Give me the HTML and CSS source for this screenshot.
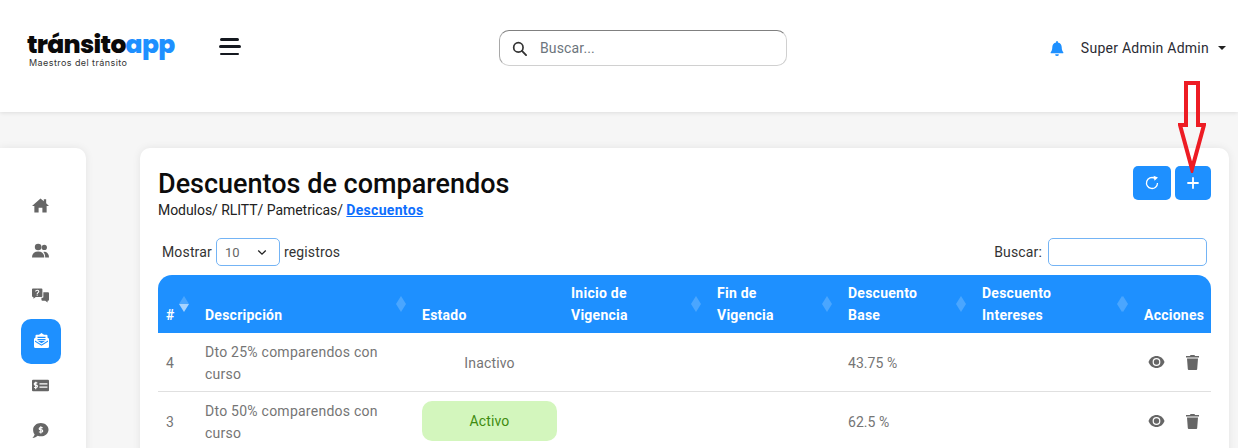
FILE: index.html
```html
<!DOCTYPE html>
<html lang="es">
<head>
<meta charset="utf-8">
<title>Descuentos de comparendos</title>
<link rel="stylesheet" href="styles.css">
</head>
<body>
<header class="topbar">
  <div class="brand">
    <div class="logo"><span class="logo-dark">tránsito</span><span class="logo-blue">app</span></div>
    <div class="tagline">Maestros del tránsito</div>
  </div>
  <button class="burger" aria-label="Menú"><i class="b1"></i><i class="b2"></i><i class="b3"></i></button>
  <div class="search">
    <svg class="search-icon" viewBox="0 0 16 16"><circle cx="6.8" cy="6.8" r="5" fill="none" stroke="#333" stroke-width="1.8"/><path d="M10.6 10.6 15 15" stroke="#333" stroke-width="2" stroke-linecap="round"/></svg>
    <span class="search-ph">Buscar...</span>
  </div>
  <div class="user">
    <svg class="bell" viewBox="0 0 14 16"><path fill="#1e90ff" d="M7 0a1 1 0 0 1 1 1v.7c2.400.4 4 2.400 4 4.800 0 3.400 1 4.600 1.700 5.400.3.4 0 1.100-.6 1.100H.9c-.6 0-.9-.7-.6-1.100C1 11.100 2 9.900 2 6.500c0-2.400 1.600-4.400 4-4.800V1a1 1 0 0 1 1-1zM5 14h4a2 2 0 0 1-4 0z"/></svg>
    <span class="user-name">Super Admin Admin</span>
    <i class="caret"></i>
  </div>
</header>

<div class="page">
  <nav class="sidebar">
    <a class="nav-item"><svg viewBox="0 0 18 15"><path fill="#666" d="M9 0 12.500 3V1H15V5.200L18 8H15.500V15H11V10H7V15H2.500V8H0z"/></svg></a>
    <a class="nav-item"><svg viewBox="0 0 18 15"><circle cx="6.500" cy="3.800" r="3.500" fill="#666"/><circle cx="13" cy="4.300" r="2.800" fill="#666"/><path fill="#666" d="M0 15c0-4 2-6.500 6.500-6.500S13 11 13 15z"/><path fill="#666" d="M14 15c0-2.500-.7-4.700-2-6 3.500-.8 6 1.800 6 6z"/></svg></a>
    <a class="nav-item"><svg viewBox="0 0 18 15"><path fill="#666" d="M1 0h9a1 1 0 0 1 1 1v7a1 1 0 0 1-1 1H4L1.500 11V9H1a1 1 0 0 1-1-1V1a1 1 0 0 1 1-1z"/><path fill="#666" d="M12 4h5a1 1 0 0 1 1 1v7a1 1 0 0 1-1 1h-.5v2L14 13h-3a1 1 0 0 1-1-1v-2h1.500A1 1 0 0 0 12 9z"/><path fill="none" stroke="#fff" stroke-width="1.200" d="M3.800 3.300C4 1.500 7.200 1.500 7.200 3.300 7.200 4.500 5.500 4.400 5.500 5.800"/><rect x="4.900" y="6.500" width="1.200" height="1.200" fill="#fff"/></svg></a>
    <a class="nav-item active"><svg viewBox="0 0 15 15"><path fill="#fff" d="M7.500 0 10 1.800h2.500a1 1 0 0 1 1 1v1.700L15 5.800V13.500a1.500 1.500 0 0 1-1.500 1.500h-12A1.500 1.500 0 0 1 0 13.500V5.800l1.500-1.300V2.800a1 1 0 0 1 1-1H5z"/><path fill="#1e90ff" d="M3.500 3.800h8v1.300h-8zM3.500 6h8v1.300h-8zM1 7.500l6.500 4 6.500-4v1.200l-6.500 4-6.500-4zM4 8h7l-3.500 2.200z"/></svg></a>
    <a class="nav-item"><svg viewBox="0 0 16 12"><rect width="16" height="11" y=".5" rx="1" fill="#666"/><path fill="none" stroke="#fff" stroke-width="1.100" d="M5 3.500H3.200a.9.9 0 0 0 0 2.200h.8a.9.9 0 0 1 0 2.200H2M3.500 2.500v7M7 4.500h7.500M7 7.500h7.500"/></svg></a>
    <a class="nav-item"><svg viewBox="0 0 15 14"><path fill="#666" d="M7.800 0C11.700 0 15 2.700 15 6.200s-3.300 6.200-7.200 6.200c-1 0-2-.2-2.900-.5C3.700 12.900 2 14 0 14c1-.9 1.800-2.100 2-3.400C1.100 9.600.6 7.900.6 6.200.6 2.700 3.900 0 7.800 0z"/><path fill="none" stroke="#fff" stroke-width="1.100" d="M9.500 4.300H7.300a1 1 0 0 0 0 2h1.200a1 1 0 0 1 0 2.100H6M7.800 3v6.700"/></svg></a>
  </nav>

  <main class="card">
    <div class="card-head">
      <div>
        <h1 class="title">Descuentos de comparendos</h1>
        <div class="crumbs">Modulos/ RLITT/ Pametricas/ <a class="crumb-link">Descuentos</a></div>
      </div>
      <div class="actions">
        <button class="btn btn-wide" aria-label="Actualizar"><svg viewBox="0 0 16 16"><path fill="none" stroke="#fff" stroke-width="1.300" d="M13.500 8A5.500 5.500 0 1 1 10.500 3.100"/><path fill="#fff" d="M9.500 .8 14 2.500l-3.500 3.300z"/></svg></button>
        <button class="btn" aria-label="Agregar"><svg viewBox="0 0 16 16"><path stroke="#fff" stroke-width="1.800" stroke-linecap="round" d="M8 3v10M3 8h10"/></svg></button>
      </div>
    </div>

    <div class="controls">
      <div class="length">
        <span>Mostrar</span>
        <span class="select">10<svg viewBox="0 0 12 8"><path fill="none" stroke="#222" stroke-width="1.600" d="M1.500 1.500 6 6l4.500-4.500"/></svg></span>
        <span>registros</span>
      </div>
      <div class="filter">
        <span>Buscar:</span>
        <span class="filter-input"></span>
      </div>
    </div>

    <table class="grid">
      <colgroup>
        <col class="c1"><col class="c2"><col class="c3"><col class="c4"><col class="c5"><col class="c6"><col class="c7"><col class="c8">
      </colgroup>
      <thead>
        <tr>
          <th class="sorted">#</th>
          <th class="sort">Descripción</th>
          <th>Estado</th>
          <th class="sort">Inicio de Vigencia</th>
          <th class="sort">Fin de Vigencia</th>
          <th class="sort">Descuento Base</th>
          <th class="sort">Descuento Intereses</th>
          <th class="sort-left">Acciones</th>
        </tr>
      </thead>
      <tbody>
        <tr>
          <td>4</td>
          <td>Dto 25% comparendos con curso</td>
          <td><span class="status">Inactivo</span></td>
          <td></td><td></td>
          <td class="num">43.75 %</td>
          <td></td>
          <td class="row-actions">
            <svg class="eye" viewBox="0 0 16 12"><path fill="#666" d="M8 0c3.600 0 6.700 2.300 8 6-1.300 3.700-4.400 6-8 6S1.300 9.700 0 6c1.300-3.700 4.400-6 8-6z"/><circle cx="8" cy="6" r="3.900" fill="#fff"/><circle cx="8" cy="6" r="2.700" fill="#666"/></svg>
            <svg class="trash" viewBox="0 0 13 15"><path fill="#666" d="M4.500 0h4l.5 1h4v1.500H0V1h4zM1 3.500h11L11.200 14a1 1 0 0 1-1 1H2.800a1 1 0 0 1-1-1z"/></svg>
          </td>
        </tr>
        <tr>
          <td>3</td>
          <td>Dto 50% comparendos con curso</td>
          <td><span class="status active">Activo</span></td>
          <td></td><td></td>
          <td class="num">62.5 %</td>
          <td></td>
          <td class="row-actions">
            <svg class="eye" viewBox="0 0 16 12"><path fill="#666" d="M8 0c3.600 0 6.700 2.300 8 6-1.300 3.700-4.400 6-8 6S1.300 9.700 0 6c1.300-3.700 4.400-6 8-6z"/><circle cx="8" cy="6" r="3.900" fill="#fff"/><circle cx="8" cy="6" r="2.700" fill="#666"/></svg>
            <svg class="trash" viewBox="0 0 13 15"><path fill="#666" d="M4.500 0h4l.5 1h4v1.500H0V1h4zM1 3.500h11L11.200 14a1 1 0 0 1-1 1H2.800a1 1 0 0 1-1-1z"/></svg>
          </td>
        </tr>
      </tbody>
    </table>
  </main>
</div>

<svg class="arrow" viewBox="0 0 28 92"><path fill="none" stroke="#ed1c24" stroke-width="4" d="M8 2H20V44H26L14 88 2 44H8z"/></svg>
</body>
</html>
```

FILE: styles.css
```css
* { box-sizing: border-box; }
html, body { margin: 0; height: 448px; overflow: hidden; }
body {
  background: #f6f6f6;
  font-family: Roboto, "Liberation Sans", sans-serif;
  font-size: 14px;
  color: #222;
  position: relative;
}

/* Top bar */
.topbar {
  height: 112px;
  background: #fff;
  box-shadow: 0 1px 4px rgba(0,0,0,.1);
  display: flex;
  align-items: flex-start;
  padding: 30px 12px 0 27px;
}
.brand { width: 190px; }
.logo { font-family: Poppins, Inter, "Open Sans", sans-serif; font-weight: 800; font-size: 25px; line-height: 30px; letter-spacing: -.7px; white-space: nowrap; }
.logo-dark { color: #0a0a0a; }
.logo-blue { color: #1e90ff; }
.tagline { font-family: Inter, sans-serif; font-size: 9px; line-height: 10px; margin: -2px 0 0 2px; color: #333; letter-spacing: .43px; white-space: nowrap; }
.burger { width: 24px; height: 17px; margin-top: 8px; padding: 0; border: 0; background: none; display: flex; flex-direction: column; justify-content: space-between; align-items: flex-end; }
.burger i { display: block; height: 2.500px; background: #14181f; border-radius: 2px; }
.b1 { width: 19px; margin-right: 2px; }
.b2 { width: 22px; }
.b3 { width: 19px; margin-right: 2px; }
.search {
  margin-left: 258px;
  width: 288px;
  height: 36px;
  border: 1px solid #a8a8a8;
  border-top-color: #808080;
  border-bottom-color: #d0d0d0;
  border-right-color: #d0d0d0;
  border-radius: 10px;
  display: flex;
  align-items: center;
  padding-left: 12px;
}
.search-icon { width: 15px; height: 15px; }
.search-ph { margin-left: 13px; color: #6c757d; font-size: 14px; letter-spacing: .15px; }
.user { margin-left: auto; display: flex; align-items: center; height: 36px; }
.bell { width: 14px; height: 15px; margin-right: 17px; }
.user-name { font-size: 14px; letter-spacing: .25px; color: #2b2b33; }
.caret { margin-left: 9px; width: 0; height: 0; border: 4px solid transparent; border-top-color: #222; border-bottom: 0; }

/* Page */
.page { display: flex; align-items: flex-start; padding: 36px 9px 0 0; gap: 54px; height: 336px; overflow: hidden; }
.sidebar {
  width: 86px;
  height: 330px;
  background: #fff;
  border-radius: 0 10px 10px 0;
  box-shadow: 0 0 8px rgba(0,0,0,.08);
  display: flex;
  flex-direction: column;
  align-items: center;
  padding: 35px 4px 0 0;
  flex: none;
}
.nav-item { width: 40px; height: 45px; padding-right: 1px; display: flex; align-items: center; justify-content: center; flex: none; }
.nav-item svg { width: 17px; height: 15px; }
.nav-item.active { background: #1e90ff; border-radius: 10px; margin: 1px 0 -1px; padding: 0 0 3px; }
.nav-item.active svg { width: 15px; height: 15px; }
.card {
  flex: 1;
  height: 330px;
  background: #fff;
  border-radius: 10px;
  box-shadow: 0 0 8px rgba(0,0,0,.08);
  padding: 18px 18px 0;
}
.card-head { display: flex; justify-content: space-between; align-items: flex-start; }
.title { margin: 2px 0 0; font-size: 27px; line-height: 32px; font-weight: 500; color: #0c0c0c; }
.crumbs { margin-top: 2px; font-size: 14px; line-height: 17px; color: #222; letter-spacing: -.05px; }
.crumb-link { font-weight: 700; color: #0d6efd; text-decoration: underline; letter-spacing: .3px; }
.actions { display: flex; gap: 4px; }
.btn { width: 36px; height: 34px; border: 0; border-radius: 5px; background: #1e90ff; padding: 0; display: flex; align-items: center; justify-content: center; }
.btn-wide { width: 38px; }
.btn svg { width: 16px; height: 16px; }

.controls { display: flex; justify-content: space-between; align-items: center; margin-top: 19px; padding: 0 4px; height: 28px; letter-spacing: .15px; }
.length, .filter { display: flex; align-items: center; gap: 5px; color: #333; }
.length { gap: 4px; }
.filter { gap: 6px; }
.select { width: 64px; height: 28px; border: 1px solid #74b4f5; border-radius: 5px; display: flex; align-items: center; justify-content: space-between; padding: 0 12px 0 8px; font-size: 13px; color: #666; }
.select svg { width: 10px; height: 7px; }
.filter-input { width: 159px; height: 28px; border: 1px solid #74b4f5; border-radius: 5px; }

/* Table */
.grid { width: 1053px; border-collapse: separate; border-spacing: 0; table-layout: fixed; margin-top: 9px; }
.c1 { width: 39px; } .c2 { width: 217px; } .c3 { width: 149px; } .c4 { width: 146px; }
.c5 { width: 131px; } .c6 { width: 134px; } .c7 { width: 162px; } .c8 { width: 75px; }
.grid th {
  height: 58px;
  background: #1e90ff;
  color: #fff;
  text-align: left;
  vertical-align: bottom;
  font-size: 14px;
  font-weight: 700;
  line-height: 22px;
  padding: 7px 8px 7px;
  position: relative;
  letter-spacing: .25px;
}
.grid th.sort { padding-right: 30px; }
.grid th:first-child { border-top-left-radius: 14px; }
.grid th:last-child { border-top-right-radius: 14px; }
.sort::after, .sort-left::after, .sorted::after {
  content: "";
  position: absolute;
  top: 21px;
  right: 8px;
  width: 10px;
  height: 16px;
  background: #4aa6ff;
  clip-path: polygon(50% 0, 100% 50%, 50% 100%, 0 50%);
}
.sort-left::after { left: -19px; right: auto; }
.sorted::after { right: 8px; background: linear-gradient(#4aa6ff 50%, #a5d3ff 50%); }
.grid td {
  height: 59px;
  padding: 2px 8px 0;
  font-size: 14px;
  line-height: 22px;
  color: #757575;
  letter-spacing: .25px;
  border-bottom: 1px solid #e0e0e0;
}
.grid td.num { letter-spacing: .05px; }
.status { display: flex; width: 135px; height: 40px; align-items: center; justify-content: center; border-radius: 10px; letter-spacing: .15px; }
.status.active { background: #d3f6bd; color: #3f8c10; margin-top: -2px; }
.grid td.row-actions { padding: 0; text-align: right; white-space: nowrap; font-size: 0; }
.eye { width: 17px; height: 12px; vertical-align: middle; }
.trash { width: 13px; height: 15px; margin: 0 12px 0 21px; vertical-align: middle; }

/* Annotation drawn over the screenshot */
.arrow { position: absolute; left: 1178px; top: 81px; width: 28px; height: 92px; }
```
